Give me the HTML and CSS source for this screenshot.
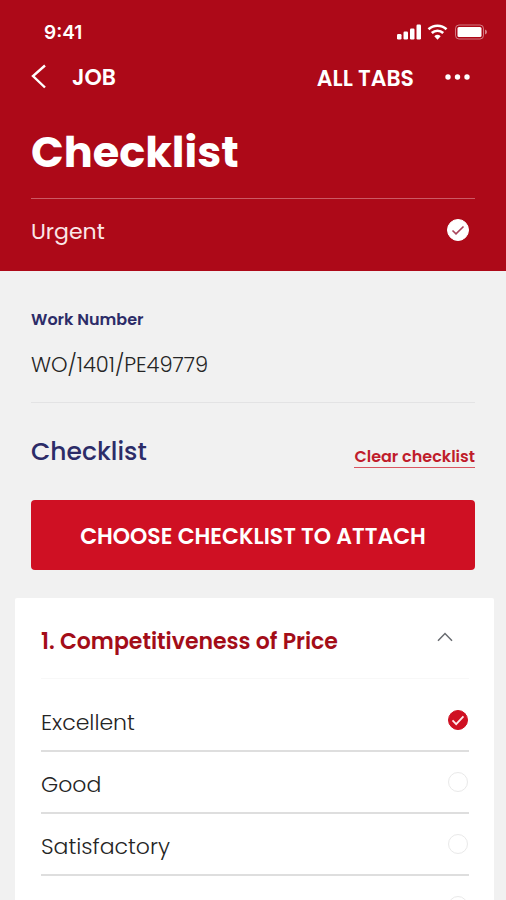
FILE: index.html
```html
<!DOCTYPE html>
<html lang="en">
<head>
<meta charset="utf-8">
<meta name="viewport" content="width=device-width, initial-scale=1">
<title>Checklist</title>
<link rel="stylesheet" href="styles.css">
</head>
<body>
<div class="app">
  <header class="header">
    <div class="status">
      <span class="time">9:41</span>
      <svg class="status-icons" width="90" height="18" viewBox="0 0 90 18" fill="#fff" aria-hidden="true">
        <rect x="0" y="11" width="4.5" height="5.500" rx="1.200"/>
        <rect x="6.500" y="8.500" width="4.500" height="8" rx="1.200"/>
        <rect x="13" y="5.500" width="4.500" height="11" rx="1.200"/>
        <rect x="19.500" y="1.500" width="4.500" height="15" rx="1.200"/>
        <g fill="none" stroke="#fff" stroke-width="2.600">
          <path d="M31.500 6.300a13 13 0 0 1 18 0"/>
          <path d="M34.800 10a8.200 8.200 0 0 1 11.400 0"/>
        </g>
        <path d="M37.300 13.200a4.700 4.700 0 0 1 6.400 0L40.500 16.800z"/>
        <rect x="58.500" y="2" width="28" height="14" rx="3.500" fill="none" stroke="#fff" stroke-opacity=".45"/>
        <rect x="60.500" y="4" width="24" height="10" rx="1.500"/>
        <path d="M88 6.500q2 .8 2 2.500t-2 2.500z" fill-opacity=".5"/>
      </svg>
    </div>
    <nav class="nav">
      <a class="back" href="#">
        <svg width="16" height="26" viewBox="0 0 16 26" fill="none" stroke="#fff" stroke-width="2.400" aria-hidden="true"><path d="M14 1.500 2 12l12 11.500"/></svg>
        JOB
      </a>
      <a class="tabs" href="#">ALL TABS</a>
      <button class="more" type="button" aria-label="More">
        <svg width="26" height="6" viewBox="0 0 26 6" fill="#fff" aria-hidden="true"><circle cx="3" cy="3" r="2.700"/><circle cx="12.500" cy="3" r="2.700"/><circle cx="22" cy="3" r="2.700"/></svg>
      </button>
    </nav>
    <h1 class="title">Checklist</h1>
    <label class="urgent">
      <span>Urgent</span>
      <span class="mark">
        <input class="dot light" type="checkbox" checked>
        <svg class="tick" width="22" height="22" viewBox="0 0 22 22" fill="none" stroke="#a8435a" stroke-width="1.600" aria-hidden="true"><path d="M5.500 11.500 9 14.800 16.500 7.500"/></svg>
      </span>
    </label>
  </header>

  <main class="main">
    <dl class="work">
      <dt>Work Number</dt>
      <dd>WO/1401/PE49779</dd>
    </dl>
    <div class="section-head">
      <h2>Checklist</h2>
      <a class="clear" href="#">Clear checklist</a>
    </div>
    <button class="choose" type="button">CHOOSE CHECKLIST TO ATTACH</button>
  </main>

  <section class="card">
    <div class="card-head">
      <h3>1. Competitiveness of Price</h3>
      <button class="fold" type="button" aria-label="Collapse">
        <svg width="16" height="10" viewBox="0 0 16 10" fill="none" stroke="#686b70" stroke-width="1.500" aria-hidden="true"><path d="M1 8.800 8 1.500l7 7.300"/></svg>
      </button>
    </div>
    <div class="options">
      <label class="option">
        <span class="name">Excellent</span>
        <span class="mark">
          <input class="dot" type="radio" name="price" checked>
          <svg class="tick" width="20" height="20" viewBox="0 0 22 22" fill="none" stroke="#ffe9eb" stroke-width="2" aria-hidden="true"><path d="M5 11.500 9 15.500 17 7"/></svg>
        </span>
      </label>
      <label class="option">
        <span class="name">Good</span>
        <span class="mark"><input class="dot" type="radio" name="price"></span>
      </label>
      <label class="option">
        <span class="name">Satisfactory</span>
        <span class="mark"><input class="dot" type="radio" name="price"></span>
      </label>
      <label class="option">
        <span class="name">Poor</span>
        <span class="mark"><input class="dot" type="radio" name="price"></span>
      </label>
    </div>
  </section>
</div>
</body>
</html>
```
FILE: styles.css
```css
* {
  box-sizing: border-box;
}

body {
  margin: 0;
  background: #f1f1f1;
  color: #252525;
  font-family: Poppins, Inter, "Liberation Sans", sans-serif;
  font-size: 22px;
}

h1, h2, h3, dl, dd {
  margin: 0;
}

a {
  color: inherit;
  text-decoration: none;
}

button {
  padding: 0;
  border: 0;
  background: none;
  color: inherit;
  font: inherit;
}

svg {
  display: block;
}

.app {
  height: 100vh;
  overflow: hidden;
}

.header {
  padding: 20px 31px 8px;
  background: #ad0918;
  color: #fff;
}

.status {
  display: flex;
  align-items: center;
  justify-content: space-between;
  height: 24px;
  margin: 0 -12px 0 13px;
}

.time {
  font-family: Inter, "Liberation Sans", sans-serif;
  font-size: 19px;
  font-weight: 600;
}

.nav {
  display: flex;
  align-items: center;
  height: 66px;
  font-weight: 600;
}

.back {
  display: flex;
  align-items: center;
  gap: 25px;
}

.tabs {
  margin-left: auto;
  padding-top: 2px;
}

.more {
  margin: 0 4px 0 31px;
}

.title {
  padding: 2px 0 6px;
  border-bottom: 1px solid #cc5964;
  font-size: 43px;
  font-weight: 700;
  line-height: 80px;
}

.urgent,
.option {
  display: flex;
  align-items: center;
  justify-content: space-between;
}

.urgent {
  height: 64px;
  padding: 0 6px 2px 0;
  color: #fbe6e8;
}

.urgent > span:first-child {
  padding-top: 2px;
}

.mark {
  display: grid;
}

.mark > * {
  grid-area: 1 / 1;
}

.dot {
  width: 20px;
  height: 20px;
  margin: 0;
  appearance: none;
  border: 1px solid #e9e9e9;
  border-radius: 50%;
}

.dot:checked {
  border-color: #cf1022;
  background: #cf1022;
}

.dot.light {
  width: 22px;
  height: 22px;
}

.dot.light:checked {
  border-color: #fff;
  background: #fff;
}

.tick {
  pointer-events: none;
  z-index: 1;
}

.main {
  padding: 37px 31px 28px;
}

.work {
  padding-bottom: 21px;
  border-bottom: 1px solid #e3e3e4;
}

.work dt {
  color: #2c2c68;
  font-size: 16px;
  font-weight: 600;
  line-height: 24px;
}

.work dd {
  margin-top: 17px;
  font-size: 21px;
  font-weight: 300;
  line-height: 32px;
}

.section-head {
  display: flex;
  align-items: flex-end;
  justify-content: space-between;
  margin: 33px 0 32px;
}

.section-head h2 {
  color: #2c2c68;
  font-size: 25px;
  font-weight: 500;
  line-height: 32px;
}

.clear {
  border-bottom: 1px solid #d95560;
  color: #c01c2b;
  font-size: 16px;
  font-weight: 600;
  line-height: 20px;
}

.choose {
  display: block;
  width: 100%;
  height: 70px;
  padding-top: 2px;
  border-radius: 4px;
  background: #cf1023;
  color: #fff;
  font-weight: 600;
}

.card {
  margin: 0 12px 0 15px;
  padding: 0 25px 0 26px;
  background: #fff;
  border-radius: 2px;
}

.card-head {
  display: flex;
  align-items: center;
  justify-content: space-between;
  height: 81px;
  padding-top: 6px;
  border-bottom: 1px solid #f8f8f8;
}

.card-head h3 {
  color: #a30d18;
  font-size: 22px;
  font-weight: 600;
}

.fold {
  margin: 0 16px 8px 0;
}

.options {
  padding-top: 11px;
}

.option {
  height: 62px;
  padding-right: 1px;
  border-bottom: 2px solid #dedede;
  font-weight: 300;
}

.name {
  padding-top: 4px;
}
```
